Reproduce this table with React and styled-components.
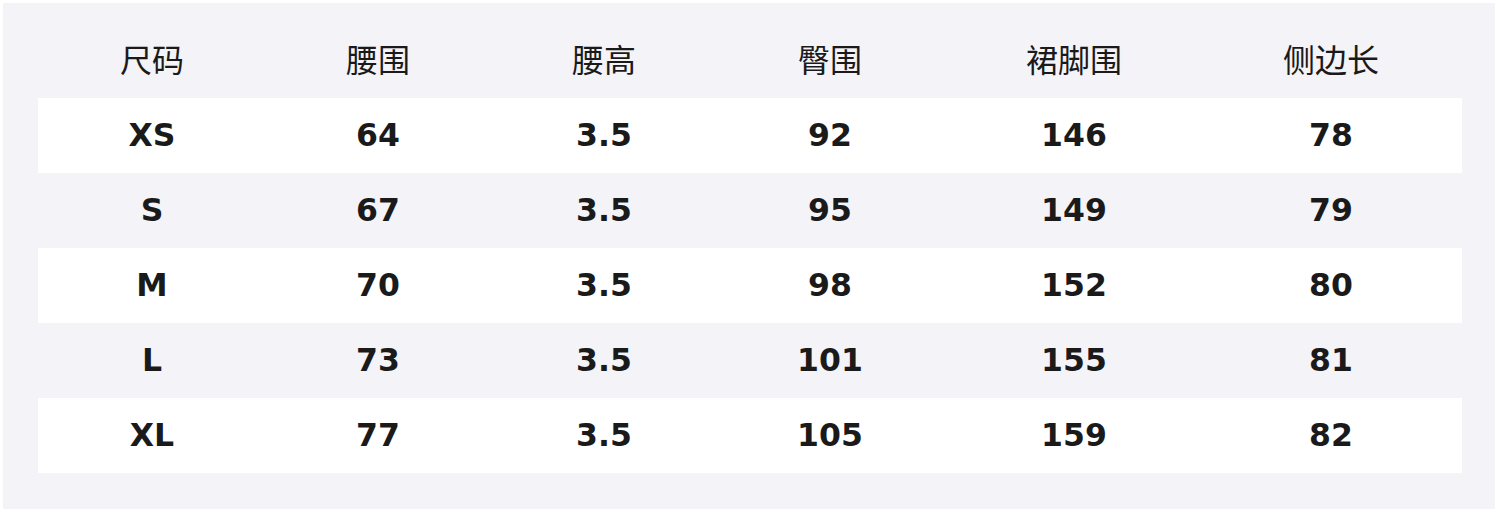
import React from "react";
import styled, { createGlobalStyle } from "styled-components";

const Global = createGlobalStyle`
  html, body { margin: 0; padding: 0; background: #ffffff; }
  body { font-family: "DejaVu Sans", "Noto Sans CJK SC", sans-serif; }
`;

const Page = styled.div`
  width: 1500px;
  height: 512px;
  padding: 3px 5px 3px 3px;
  box-sizing: border-box;
  background: #ffffff;
`;

const Panel = styled.div`
  width: 1492px;
  height: 506px;
  box-sizing: border-box;
  background: #f4f3f8;
  padding: 20px 33px 0 35px;
`;

const Table = styled.div`
  display: grid;
  grid-template-columns: 228px 224px 228px 224px 264px 256px;
  width: 1424px;
`;

const Row = styled.div`
  display: contents;
`;

const Cell = styled.div`
  height: 75px;
  box-sizing: border-box;
  display: flex;
  align-items: center;
  justify-content: center;
  background: ${(p) => (p.$white ? "#ffffff" : "transparent")};
  color: #1a1a1a;
  font-family: ${(p) =>
    p.$head
      ? '"Noto Sans CJK SC", "DejaVu Sans", sans-serif'
      : '"DejaVu Sans", sans-serif'};
  font-size: ${(p) => (p.$head ? "32px" : "31.5px")};
  font-weight: ${(p) => (p.$head ? 400 : 700)};
  line-height: 1;
  padding-bottom: ${(p) => (p.$head ? "6px" : "0")};
  &:last-child {
    padding-right: 6px;
  }
`;

const headers = ["尺码", "腰围", "腰高", "臀围", "裙脚围", "侧边长"];
const rows = [
  ["XS", "64", "3.5", "92", "146", "78"],
  ["S", "67", "3.5", "95", "149", "79"],
  ["M", "70", "3.5", "98", "152", "80"],
  ["L", "73", "3.5", "101", "155", "81"],
  ["XL", "77", "3.5", "105", "159", "82"],
];

export default function App() {
  return (
    <>
      <Global />
      <Page>
        <Panel>
          <Table>
            <Row>
              {headers.map((h) => (
                <Cell key={h} $head>
                  {h}
                </Cell>
              ))}
            </Row>
            {rows.map((r, i) => (
              <Row key={r[0]}>
                {r.map((v, j) => (
                  <Cell key={j} $white={i % 2 === 0}>
                    {v}
                  </Cell>
                ))}
              </Row>
            ))}
          </Table>
        </Panel>
      </Page>
    </>
  );
}
